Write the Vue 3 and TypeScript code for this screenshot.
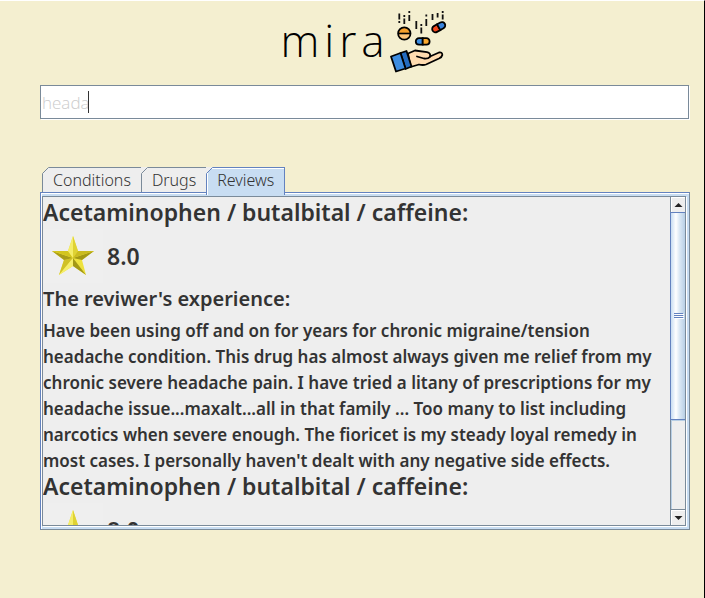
<script setup lang="ts">
import { ref } from 'vue'

interface Review {
  drug: string
  rating: string
  lines: string[]
}

const query = ref('heada')
const tabs = ['Conditions', 'Drugs', 'Reviews']
const active = ref('Reviews')

const reviewText = [
  'Have been using off and on for years for chronic migraine/tension',
  'headache condition. This drug has almost always given me relief from my',
  'chronic severe headache pain. I have tried a litany of prescriptions for my',
  'headache issue...maxalt...all in that family ... Too many to list including',
  'narcotics when severe enough. The fioricet is my steady loyal remedy in',
  "most cases. I personally haven't dealt with any negative side effects.",
]

const reviews: Review[] = [
  { drug: 'Acetaminophen / butalbital / caffeine:', rating: '8.0', lines: reviewText },
  { drug: 'Acetaminophen / butalbital / caffeine:', rating: '8.0', lines: [] },
]
</script>

<template>
  <main class="page">
    <header class="brand">
      <h1 class="name">mira</h1>
      <svg class="logo" viewBox="0 0 60 64" aria-hidden="true">
        <g stroke="#111" stroke-width="1.8" fill="none">
          <path d="M9.300 3.500v6M9.300 11v2M14.300 5v2M14.300 8.500v5.500M19.300 1v2M19.300 5v6M26.300 11v8M31.300 14v2M31.300 17.500v6M36.300 4.500v2M36.300 9v7M42.500 4v6M47.600 3v4.500M52.700 1v2M52.700 4.500v5" />
        </g>
        <circle cx="14.300" cy="23.500" r="6.200" fill="#ffc477" />
        <path d="M8.300 23.500a6 6 0 0 1 12 0z" fill="#f7a02c" />
        <path d="M8.300 23.500h12" stroke="#000" stroke-width="1.600" />
        <circle cx="14.300" cy="23.500" r="6.200" fill="none" stroke="#000" stroke-width="1.800" />
        <g stroke="#000" stroke-width="1.800">
          <path d="M32.700 28.200h-3.700a3.200 3.200 0 0 0 0 6.400h3.700z" fill="#3d8fe5" />
          <path d="M32.700 28.200h3.700a3.200 3.200 0 0 1 0 6.400h-3.700z" fill="#fba92e" />
          <g transform="rotate(-29 48.700 17.200)">
            <path d="M48.700 13.900h-3.700a3.300 3.300 0 0 0 0 6.600h3.700z" fill="#f2471d" />
            <path d="M48.700 13.900h3.700a3.300 3.300 0 0 1 0 6.600h-3.700z" fill="#3983dc" />
          </g>
        </g>
        <g stroke="#000" stroke-width="1.800" stroke-linejoin="round" stroke-linecap="round">
          <path d="M18 43.500L25 40.500L37 42.200Q41 43 40 46.500L49 42.500Q52.500 42 52.300 45Q52 47 49 48.500L36 54.500Q33 55.500 29 54.500L20.500 57Z" fill="#ffdcb0" />
          <path d="M40 46.800Q38 49 34 48.500L27 46.500" fill="none" />
          <path d="M10.500 43L16.500 41L21.500 56.500L15.500 59Z" fill="#246cc0" />
          <path d="M1 46.500L10.500 43L15.500 58.500L6 61.500Z" fill="#3d8de0" />
        </g>
      </svg>
    </header>

    <div class="search">
      <input v-model="query" class="field" type="text" aria-label="Search" />
      <span class="caret"></span>
    </div>

    <div class="tabs" role="tablist">
      <button
        v-for="tab in tabs"
        :key="tab"
        type="button"
        role="tab"
        class="tab"
        :class="{ selected: tab === active }"
        :aria-selected="tab === active"
        @click="active = tab"
      >
        <svg class="notch" viewBox="0 0 7 7" aria-hidden="true">
          <path class="outside" d="M0 0H7L0 7Z" />
          <path class="edge" d="M0.500 6.500L6.500 0.500" />
        </svg>
        {{ tab }}
      </button>
    </div>

    <section class="panel">
      <div class="pane">
        <div class="content">
          <article v-for="(review, i) in reviews" :key="i" class="review">
            <h2 class="drug">{{ review.drug }}</h2>
            <div class="rating">
              <span class="thumb-image">
                <svg class="star" viewBox="0 0 44 42" aria-hidden="true">
                  <path d="M22 1L27 16L43 16L31 25L35 40L22 31L8 40L13 25L1 16L17 16Z" fill="#eee23d" />
                  <path d="M22 1L22 23L27 16Z" fill="#dfd233" />
                  <path d="M43 16L22 23L31 25Z" fill="#a39815" />
                  <path d="M43 16L27 16L22 23Z" fill="#cabb20" />
                  <path d="M35 40L22 23L22 31Z" fill="#a39815" />
                  <path d="M8 40L22 23L13 25Z" fill="#d0c127" />
                  <path d="M8 40L22 23L22 31Z" fill="#f5ee6c" />
                  <path d="M1 16L22 23L13 25Z" fill="#a99d18" />
                  <path d="M1 16L17 16L22 23Z" fill="#d3c51e" />
                  <path d="M22 1L17 16L22 23Z" fill="#f4ed69" />
                </svg>
              </span>
              <span class="score">{{ review.rating }}</span>
            </div>
            <template v-if="review.lines.length">
              <h3 class="label">The reviwer's experience:</h3>
              <p class="text">
                <span v-for="line in review.lines" :key="line" class="line">{{ line }}</span>
              </p>
            </template>
          </article>
        </div>
        <div class="scrollbar">
          <button type="button" class="arrow" aria-label="Scroll up">
            <svg viewBox="0 0 8 4" aria-hidden="true"><path d="M0 4L4 0L8 4Z" /></svg>
          </button>
          <div class="track">
            <div class="handle"><i></i><i></i><i></i></div>
            <div class="rest"></div>
          </div>
          <button type="button" class="arrow down" aria-label="Scroll down">
            <svg viewBox="0 0 8 4" aria-hidden="true"><path d="M0 0L4 4L8 0Z" /></svg>
          </button>
        </div>
      </div>
    </section>
  </main>
</template>

<style>
body {
  background: #f4efd0;
}
</style>

<style scoped>
* {
  box-sizing: border-box;
}
.page {
  display: flex;
  flex-direction: column;
  height: 100vh;
  padding: 0 14px 68px 40px;
  border-top: 1px solid #fff;
  border-right: 1px solid #000;
  background: #f4efd0;
  color: #333;
  font-family: "Noto Sans", "Open Sans", sans-serif;
}
.brand {
  display: flex;
  justify-content: center;
  height: 84px;
  padding-top: 9px;
}
.name {
  margin: 0;
  color: #000;
  font-family: "Open Sans", sans-serif;
  font-size: 44px;
  font-weight: 300;
  line-height: 60px;
  letter-spacing: 5px;
}
.logo {
  width: 60px;
  height: 64px;
}
.search {
  display: flex;
  align-items: center;
  height: 34px;
  margin-right: 1px;
  border: 1px solid #7a8a99;
  background: #fff;
  box-shadow: 1px 1px 0 #fff;
}
.field {
  width: 47px;
  padding: 0 0 0 1px;
  border: 0;
  outline: 0;
  background: transparent;
  color: #ccc;
  font-family: "Open Sans", sans-serif;
  font-size: 17px;
  font-weight: 300;
}
.caret {
  width: 1px;
  height: 22px;
  background: #333;
}
.tabs {
  display: flex;
  height: 25px;
  margin-top: 48px;
  padding-left: 2px;
}
.tab {
  position: relative;
  height: 25px;
  padding: 0 10px;
  border: 1px solid #7a8a99;
  border-bottom: 0;
  background: #eee;
  color: #333;
  font-family: "Noto Sans", sans-serif;
  font-size: 16px;
  font-weight: 300;
  line-height: 24px;
}
.tab + .tab {
  margin-left: -1px;
}
.tab.selected {
  z-index: 1;
  height: 28px;
  padding-bottom: 3px;
  border-color: #6382bf;
  background: #c8ddf2;
  box-shadow: inset 1px 1px 0 #fff;
}
.notch {
  position: absolute;
  top: -1px;
  left: -1px;
  width: 7px;
  height: 7px;
}
.outside {
  fill: #f4efd0;
}
.tab + .tab .outside {
  fill: #eee;
}
.edge {
  fill: none;
  stroke: #7a8a99;
}
.selected .edge {
  stroke: #6382bf;
}
.panel {
  flex: 1;
  min-height: 0;
  padding: 3px 3px 3px 0;
  border: 1px solid #7a8a99;
  border-top-color: #6382bf;
  border-left-color: #6382bf;
  background: #c8ddf2;
  box-shadow: inset 1px 1px 0 #fff;
}
.pane {
  display: flex;
  height: 100%;
  margin-left: 1px;
  border: 1px solid #7a8a99;
  background: #eee;
  box-shadow: 1px 1px 0 #fff;
}
.content {
  flex: 1;
  min-width: 0;
  overflow: hidden;
  padding-top: 3px;
}
.drug {
  margin: 0;
  font-size: 23px;
  font-weight: 600;
  line-height: 25px;
  white-space: nowrap;
}
.rating {
  display: flex;
  align-items: center;
  height: 60px;
  padding-top: 2px;
}
.thumb-image {
  display: flex;
  align-items: center;
  justify-content: center;
  width: 60px;
  height: 54px;
  background: #efefef;
}
.star {
  width: 44px;
  height: 42px;
}
.score {
  margin-left: 4px;
  font-size: 23px;
  font-weight: 600;
}
.label {
  margin: 0 0 5px;
  font-size: 20px;
  font-weight: 600;
  line-height: 28px;
}
.text {
  margin: 0;
  font-size: 17px;
  font-weight: 600;
  line-height: 26px;
  white-space: nowrap;
}
.line {
  display: block;
}
.scrollbar {
  display: flex;
  flex-direction: column;
  width: 15px;
  border-left: 1px solid #7a8a99;
}
.arrow {
  display: flex;
  align-items: center;
  justify-content: center;
  height: 15px;
  padding: 0;
  border: 0;
  background: #eee;
  box-shadow: inset 1px 1px 0 #fff;
}
.arrow svg {
  width: 9px;
  height: 4px;
  fill: #222;
}
.down {
  height: 16px;
  border-top: 1px solid #7a8a99;
}
.track {
  display: flex;
  flex: 1;
  flex-direction: column;
}
.handle {
  display: flex;
  flex: 207;
  flex-direction: column;
  align-items: center;
  justify-content: center;
  gap: 1px;
  margin-left: -1px;
  border: 1px solid #6382bf;
  border-right: 0;
  background: linear-gradient(90deg, #c8ddf2, #fff 35%, #dce9f5 60%, #b8cfe5);
}
.handle i {
  width: 9px;
  height: 1px;
  background: #6382bf;
  box-shadow: 1px 1px 0 #fff;
}
.rest {
  flex: 90;
  box-shadow: inset 1px 1px 0 #b8cfe5;
}
</style>
